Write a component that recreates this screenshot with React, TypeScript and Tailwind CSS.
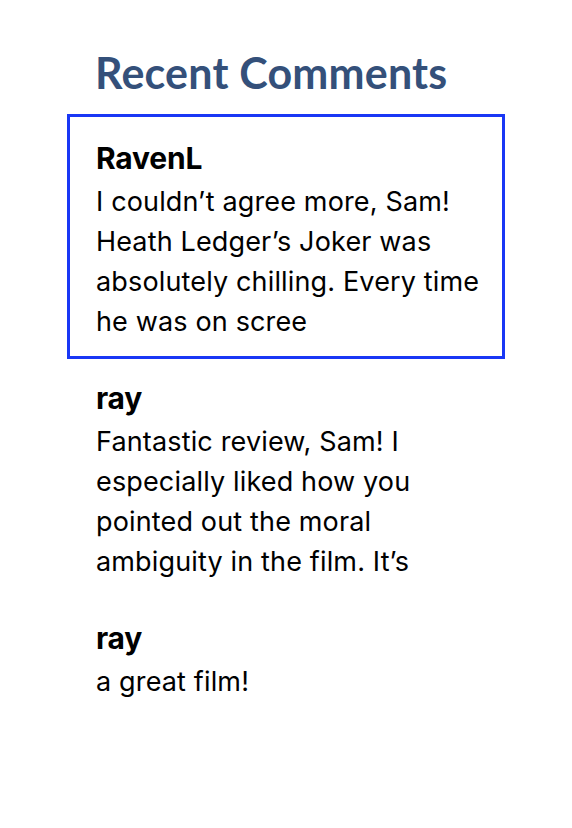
const comments = [
  {
    author: 'RavenL',
    text: 'I couldn’t agree more, Sam! Heath Ledger’s Joker was absolutely chilling. Every time he was on scree',
    active: true,
  },
  {
    author: 'ray',
    text: 'Fantastic review, Sam! I especially liked how you pointed out the moral ambiguity in the film. It’s',
    active: false,
  },
  {
    author: 'ray',
    text: 'a great film!',
    active: false,
  },
];

export default function App() {
  return (
    <div className="min-h-[828px] bg-white font-['Inter',sans-serif] text-black">
      <div className="mx-auto w-[438px] pt-[43px]">
        <h2 className="pl-[28px] font-['Lato',sans-serif] text-[43px] font-bold leading-[60px] tracking-[0.2px] text-[#34507a]">
          Recent Comments
        </h2>
        <ul className="mt-[11px]">
          {comments.map((c, i) => (
            <li
              key={i}
              className={
                c.active
                  ? '-mb-[5px] pl-[29px] pr-[22px] pb-[17px] pt-[26px] outline outline-[3px] -outline-offset-[3px] outline-[#1937f5]'
                  : 'pl-[29px] pr-[22px] pb-[12px] pt-[26px]'
              }
            >
              <div className="text-[30px] font-bold leading-[36px] tracking-[-0.2px]">{c.author}</div>
              <p className="mt-[6px] text-[27px] leading-[40px] tracking-[0.15px]">{c.text}</p>
            </li>
          ))}
        </ul>
      </div>
    </div>
  );
}
